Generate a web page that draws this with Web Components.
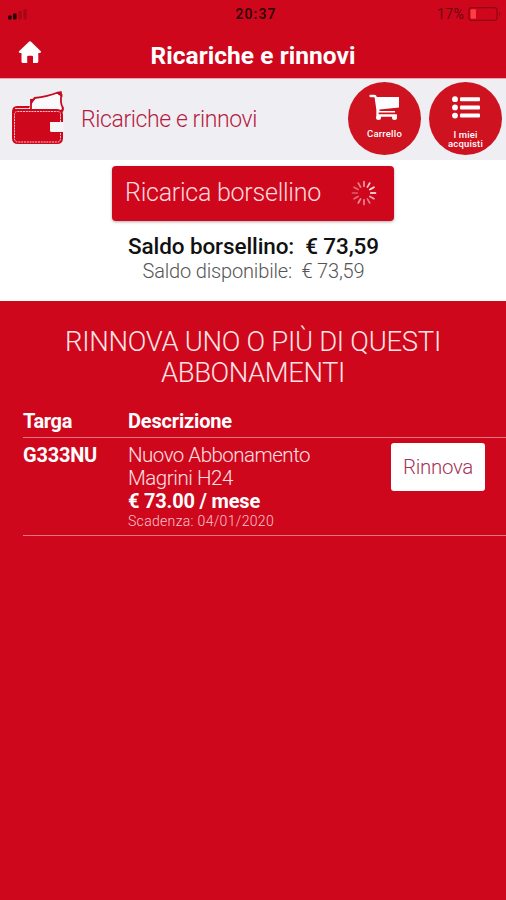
<!DOCTYPE html>
<html lang="it">
<head>
<meta charset="utf-8">
<title>Ricariche e rinnovi</title>
<style>
  body { margin: 0; background: #cf071d; font-family: Roboto, "Liberation Sans", sans-serif; color: #fff; }
</style>
</head>
<body>
<renewal-app></renewal-app>

<script>
const define = (name, html, setup) => customElements.define(name, class extends HTMLElement {
  constructor() {
    super();
    this.attachShadow({ mode: 'open' }).innerHTML = html;
  }
  connectedCallback() { if (setup) setup(this); }
});

/* One line of text, tracked so that it spans the length given in "span". */
define('text-line', `
  <style>
    :host { display: block; width: max-content; }
    span { display: block; width: max-content; white-space: pre; }
  </style><span><slot></slot></span>`, el => {
  const span = el.shadowRoot.querySelector('span');
  const target = parseFloat(el.getAttribute('span'));
  const fit = () => {
    span.style.letterSpacing = '0px';
    const w = span.getBoundingClientRect().width;
    const n = el.textContent.length;
    if (w && n) span.style.letterSpacing = ((target - w) / n).toFixed(3) + 'px';
  };
  requestAnimationFrame(fit);
});

define('status-bar', `
  <style>
    :host { display: grid; grid-template-columns: 1fr auto 1fr; align-items: center; height: 27px; padding: 0 4px 0 7px; color: #35000a; font-size: 14px; }
    .time { font-weight: 500; color: #2b0007; margin-left: 3px; }
    .power { display: flex; justify-content: flex-end; align-items: center; gap: 4px; color: #6b0510; }
    svg { display: block; }
  </style>
  <svg width="21" height="12" viewBox="0 0 21 12"><rect x="1" y="7.5" width="3.6" height="4" rx="1" fill="#210006"/><rect x="6" y="5.5" width="3.6" height="6" rx="1" fill="#210006"/><rect x="11.5" y="3" width="3.2" height="8.5" rx="1" fill="#a30817"/><rect x="16.5" y="1" width="3.2" height="10.5" rx="1" fill="#a30817"/></svg>
  <text-line class="time" span="41">20:37</text-line>
  <div class="power"><text-line span="27">17%</text-line>
  <svg width="34" height="14" viewBox="0 0 34 14"><rect x="1" y=".7" width="28" height="12.6" rx="2.5" fill="none" stroke="#8e0513" stroke-width="1.2"/><rect x="2.5" y="2.2" width="5.5" height="9.6" rx="1" fill="#ff3d42"/><path d="M31 4.7q2 2.3 0 4.6z" fill="#8e0513"/></svg></div>`);

define('title-bar', `
  <style>
    :host { display: grid; grid-template-columns: 1fr auto 1fr; height: 51px; padding: 0 18px; box-sizing: border-box; }
    svg { display: block; margin-top: 13.5px; }
    text-line { font: 700 24.5px/30px Roboto; margin-top: 14px; }
  </style>
  <svg width="24" height="23" viewBox="0 0 24 23"><path fill="#fff" d="M11.2 .5q.8-.6 1.600 0L22.800 10.200q.8 1.500-1 1.700H20.300V20.500q0 1.500-1.500 1.500H15V15.700q0-1-1-1H10.200q-1 0-1 1V22H5Q3.500 22 3.500 20.500V11.900H2Q.2 11.700 1 10.200Z"/></svg>
  <text-line span="205">Ricariche e rinnovi</text-line>`);

define('round-action', `
  <style>
    :host { display: flex; flex-direction: column; align-items: center; box-sizing: border-box; width: 73px; height: 73px; border-radius: 50%; background: #cf1220; color: #fff; }
    ::slotted(svg) { flex: none; }
    .label { display: flex; flex-direction: column; align-items: center; font: 500 9.500px/8.500px Roboto; }
  </style><slot name="icon"></slot><div class="label"><slot></slot></div>`);

define('section-band', `
  <style>
    :host { display: flex; align-items: flex-start; height: 82px; box-sizing: border-box; padding: 0 4px 0 10px; background: #efeff3; border-top: 1px solid #e9a7ae; }
    .wallet { display: block; margin-top: 11px; }
    .name { font: 300 23px/30px Roboto; color: #b61c41; margin: 26px auto 0 15px; }
    round-action { margin: 3px 0 0 8px; }
    svg { display: block; }
    .cart { margin: 12px 0 8px; }
    .list { margin: 14px 0 12px; }
  </style>
  <svg class="wallet" width="56" height="56" viewBox="0 0 56 56">
    <path d="M21 19V10q3.500 0 3.500-2Q38 6.500 48 2.500q1.200 2.500 3.500 2.200 -1.800 7 1.500 14L49 24" fill="#fafafc" stroke="#c60a20" stroke-width="1.800" stroke-linejoin="round"/>
    <path d="M45.500 2.500l6-1.500 1 6zM20 9h5l-4 6zM53.500 16v5l-4 4z" fill="#c60a20"/>
    <path fill="#cf071d" d="M7 16H20l-1.500 3H47q6 0 6 6v7.500H41v9.500H53v6q0 6-6 6H8q-6 0-6-6V22q0-6 5-6z"/>
    <path d="M5 18.500H19" stroke="#fff" stroke-width=".8"/>
    <path d="M50.500 32V24q0-2.500-3-2.500H8q-3.500 0-3.500 3v24q0 3.500 4 3.500H47q3.500 0 3.500-3.500V43" fill="none" stroke="#f4c3c9" stroke-width="1" stroke-dasharray="2 .8"/>
    <path d="M40 32H53.500v9.500H40z" fill="#f5f5f8"/>
  </svg>
  <text-line class="name" span="176">Ricariche e rinnovi</text-line>
  <round-action>
    <svg slot="icon" class="cart" width="32" height="28" viewBox="0 0 32 28"><path d="M1.500 2H5.200q1.300 0 1.600 1.500L8.500 15.500V21.500H27" fill="none" stroke="#fff" stroke-width="2.300" stroke-linejoin="round" stroke-linecap="round"/><path d="M6 3H30V13.500L10.500 15.500V17H26v1.500H8.500z" fill="#fff"/><circle cx="9.500" cy="23.500" r="2.500" fill="#fff"/><circle cx="25.500" cy="23.500" r="2.500" fill="#fff"/></svg>
    <text-line span="35">Carrello</text-line>
  </round-action>
  <round-action>
    <svg slot="icon" class="list" width="28" height="23" viewBox="0 0 28 23"><g fill="#fff"><circle cx="3" cy="3.200" r="2.900"/><circle cx="3" cy="11.400" r="2.900"/><circle cx="3" cy="19.600" r="2.900"/><rect x="8" y="1.200" width="20" height="4" rx="1"/><rect x="8" y="9.400" width="20" height="4" rx="1"/><rect x="8" y="17.600" width="20" height="4" rx="1"/></g></svg>
    <text-line span="24">I miei</text-line><text-line span="35">acquisti</text-line>
  </round-action>`);

define('loading-wheel', `
  <style>:host, svg { display: block; }</style>
  <svg width="26" height="26" viewBox="-13 -13 26 26"><g stroke="#fff" stroke-width="1.700" stroke-linecap="round"></g></svg>`, el => {
  const alpha = [.6, .75, .9, 1, .65, .45, .5, .55, .4, .35, .4, .5];
  el.shadowRoot.querySelector('g').innerHTML = alpha.map((a, i) =>
    `<path d="M0-6.800V-11.500" opacity="${a}" transform="rotate(${i * 30})"/>`).join('');
});

define('wallet-balance', `
  <style>
    :host { display: flex; flex-direction: column; align-items: center; height: 140.500px; padding-top: 6px; box-sizing: border-box; background: #fff; }
    button { all: unset; display: flex; align-items: center; justify-content: space-between; width: 282px; height: 54.500px; padding: 0 17px 0 12px; box-sizing: border-box; border-radius: 4px; background: #cf071d; color: #ffd9dc; box-shadow: 0 1px 3px #0005; }
    button text-line { font: 300 25px/30px Roboto; margin-left: 1px; }
    .total { font: 500 22.500px/26px Roboto; color: #111; margin: 12.500px 0 0 1px; }
    .available { font: 300 20px/24px Roboto; color: #555; margin: -.5px 0 0 1px; }
  </style>
  <button><text-line span="196">Ricarica borsellino</text-line><loading-wheel></loading-wheel></button>
  <text-line class="total" span="251">Saldo borsellino:  € 73,59</text-line>
  <text-line class="available" span="222">Saldo disponibile:  € 73,59</text-line>`);

define('subscription-table', `
  <style>
    :host { display: grid; grid-template-columns: 105px 263px 1fr; margin-left: 23px; align-items: start; }
    .head { font: 700 20px/28px Roboto; height: 30px; }
    .rule { grid-column: 1 / -1; height: 1px; background: #e8747f; }
    .plate { font: 700 20px/24px Roboto; margin-top: 5px; }
    .info { font: 300 20.500px/23px Roboto; color: #ffe0e2; padding-top: 6px; height: 97.500px; box-sizing: border-box; }
    .price { font-weight: 700; font-size: 20px; color: #fff; }
    .due { font-size: 14px; line-height: 17px; color: #fbc5ca; }
    button { all: unset; display: flex; align-items: center; justify-content: center; width: 94px; height: 48px; margin-top: 5px; border-radius: 3px; background: #fff; color: #a63455; font: 300 20.500px/24px Roboto; }
  </style>
  <text-line class="head" span="49">Targa</text-line><text-line class="head" span="104">Descrizione</text-line><span></span>
  <div class="rule"></div>
  <text-line class="plate" span="74">G333NU</text-line>
  <div class="info"><text-line span="182">Nuovo Abbonamento</text-line><text-line span="105">Magrini H24</text-line><text-line class="price" span="132">€ 73.00 / mese</text-line><text-line class="due" span="146">Scadenza: 04/01/2020</text-line></div>
  <button><text-line span="70">Rinnova</text-line></button>
  <div class="rule"></div>`);

define('renewal-app', `
  <style>
    :host { display: block; height: 900px; overflow: hidden; background: #cf071d; }
    h2 { display: flex; flex-direction: column; align-items: center; margin: 0; padding: 25px 0 19px; font: 300 27.500px/31px Roboto; color: #ffe4e5; }
  </style>
  <status-bar></status-bar>
  <title-bar></title-bar>
  <section-band></section-band>
  <wallet-balance></wallet-balance>
  <h2><text-line span="376">RINNOVA UNO O PIÙ DI QUESTI</text-line><text-line span="184">ABBONAMENTI</text-line></h2>
  <subscription-table></subscription-table>`);
</script>
</body>
</html>
